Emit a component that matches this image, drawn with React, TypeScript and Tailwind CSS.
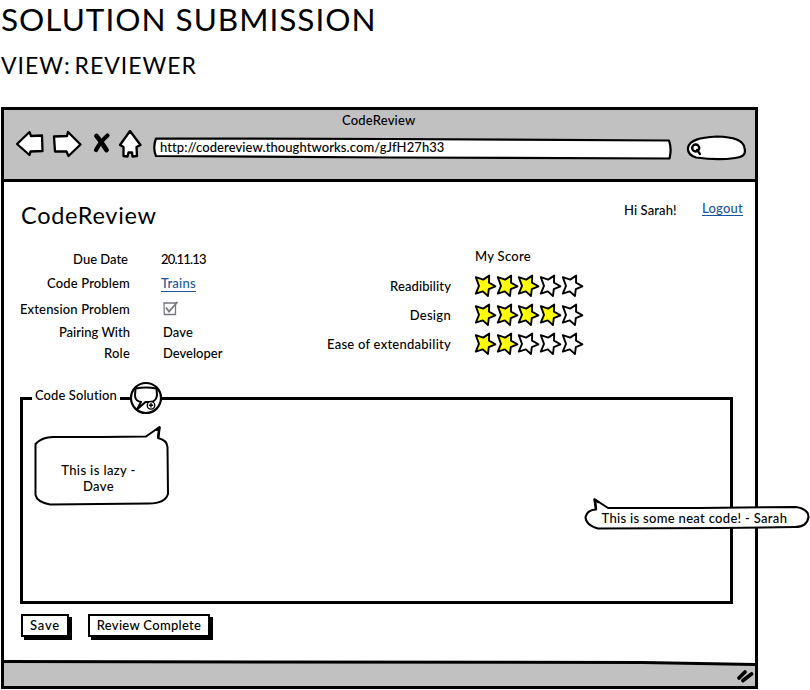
import React from "react";

const ink = { fill: "white", stroke: "black", strokeWidth: 2.2, strokeLinejoin: "round" as const, strokeLinecap: "round" as const };

function Star({ filled }: { filled: boolean }) {
  return (
    <svg className="h-[24px] w-[21.7px] overflow-visible" viewBox="0 0 21.7 24">
      <path {...ink} strokeWidth={1.9} fill={filled ? "#ffff00" : "white"} d="M1.8 3.2 L9.2 5.6 L15.2 1.6 L15 8.6 L21.4 12.3 L14.8 15.2 L14 22 L8.8 17.4 L1.8 19.6 L5 11.8 Z" />
    </svg>
  );
}

function Score({ label, value, tracking }: { label: string; value: number; tracking: string }) {
  return (
    <div className="flex h-[29px] items-center">
      <div className={"w-[134px] text-right " + tracking}>{label}</div>
      <div className="ml-[23px] flex">
        {[0, 1, 2, 3, 4].map((i) => (
          <Star key={i} filled={i < value} />
        ))}
      </div>
    </div>
  );
}

export default function App() {
  return (
    <div className="h-[690px] w-[810px] overflow-hidden bg-white font-['Lato','Open_Sans',sans-serif] text-[13px] leading-[16px] font-medium whitespace-nowrap text-black">
      <h1 className="h-[40px] pl-[1px] text-[31.5px] leading-[38px] font-normal tracking-[1px]">SOLUTION SUBMISSION</h1>
      <h2 className="h-[67px] pt-[11px] pl-[1px] text-[23px] leading-[28px] font-normal tracking-[1px] [word-spacing:-3px]">VIEW: REVIEWER</h2>

      <div className="relative ml-[1px] flex h-[582px] w-[757px] flex-col border-[3px] border-black bg-white">
        <header className="h-[72px] border-b-[3px] border-black bg-[#c1c1c1]">
          <div className="h-[20px] pt-[2px] pl-[338px]"><span className="tracking-[0.2px]">CodeReview</span></div>
          <div className="flex items-start">
            <svg className="h-[34px] w-[148px] shrink-0" viewBox="4 130 148 34">
              <path {...ink} strokeWidth="2.3" d="M17 144 L29.5 132 L31 136 L42 135.5 L42.5 151 L30.5 151.5 L29.5 155 Z" />
              <path {...ink} strokeWidth="2.3" d="M54 136.5 L67 136 L68 132 L80.5 144.5 L68.5 156 L66.5 151.5 L55 151.5 Z" />
              <path {...ink} strokeWidth="2.3" d="M120 145 L130 131 L140.5 145 L136.5 147 L137 156 L132.5 156.5 L132 152.5 L128.5 152.5 L127.5 156.5 L123.5 156 L123.5 147 Z" />
              <path d="M96.5 136 Q100 140 106.5 150" fill="none" stroke="black" strokeWidth="4.8" strokeLinecap="round" />
              <path d="M107.5 135.5 Q101 141 96 150" fill="none" stroke="black" strokeWidth="4.2" strokeLinecap="round" />
            </svg>
            <div className="relative mt-[6px] h-[24px] w-[522px] shrink-0">
              <svg className="absolute inset-0 h-full w-full" viewBox="152 136 522 24">
                <path {...ink} d="M156 138.5 L390 139 L669 140.5 Q672 149 669.5 158.5 L390 157.5 L156 156 Q152.5 148 156 138.5 Z" />
              </svg>
              <div className="relative pt-[3px] pl-[8px] tracking-[0.08px]">http://codereview.thoughtworks.com/gJfH27h33</div>
            </div>
            <svg className="mt-[3px] h-[30px] w-[72px] shrink-0" viewBox="674 133 72 30">
              <path {...ink} d="M696 157.5 C690 155.5 687.5 152 688 148 C689 140 700 137.5 717 136.5 C734 137 743.5 140 744.5 148 C746 154 744 156.5 735 158 C722 160 710 159.5 696 157.5 Z" />
              <circle cx="695.7" cy="148" r="3.5" fill="white" stroke="black" strokeWidth="2.4" />
              <path {...ink} strokeWidth="2.2" d="M697 150 L700 154" />
            </svg>
          </div>
        </header>

        <main className="flex-1">
          <div className="flex h-[63px]">
            <div className="w-[617px] pt-[18px] pl-[17px] text-[23.5px] leading-[30px] font-normal tracking-[0.7px]">CodeReview</div>
            <div className="w-[80px] pt-[20px] pl-[3px] tracking-[0.1px]">Hi Sarah!</div>
            <a className="mt-[19px] ml-[1px] h-[15px] border-b border-[#1b559f] leading-[14px] tracking-[0.2px] text-[#1b559f]">Logout</a>
          </div>

          <div className="flex h-[134px]">
            <div className="w-[313px] pt-[2px]">
              <div className="flex h-[24px] items-center"><div className="w-[124px] text-right">Due Date</div><div className="ml-[33px] tracking-[-0.85px]">20.11.13</div></div>
              <div className="flex h-[24px] items-center"><div className="w-[126px] text-right tracking-[0.15px]">Code Problem</div><a className="mt-[1px] ml-[31px] h-[16px] border-b border-[#1b559f] leading-[15px] tracking-[0.2px] text-[#1b559f]">Trains</a></div>
              <div className="flex h-[27px] items-center">
                <div className="w-[126px] text-right tracking-[0.16px]">Extension Problem</div>
                <svg className="ml-[33px] h-[15px] w-[16px]" viewBox="0 0 16 15" fill="none" stroke="#77777f">
                  <path strokeWidth="1.3" d="M1 2 H12.5 V13.5 H1.3 Z" />
                  <path strokeWidth="1.8" d="M3 6.5 L6 10.5 L14.5 1" />
                </svg>
              </div>
              <div className="flex h-[20px] items-center"><div className="w-[126px] text-right">Pairing With</div><div className="ml-[33px] tracking-[0.1px]">Dave</div></div>
              <div className="flex h-[22px] items-center"><div className="w-[126px] text-right tracking-[0.2px]">Role</div><div className="ml-[33px]">Developer</div></div>
            </div>
            <div>
              <div className="h-[26px] pt-[3px] pl-[158px] tracking-[0.3px]">My Score</div>
              <Score label="Readibility" value={3} tracking="tracking-[0.1px]" />
              <Score label="Design" value={4} tracking="tracking-[0.3px]" />
              <Score label="Ease of extendability" value={2} tracking="tracking-[0.25px]" />
            </div>
          </div>

          <section className="relative mt-[18px] ml-[16px] h-[207px] w-[713px] border-[3px] border-black">
            <div className="absolute -top-[13px] left-[9px] bg-white px-[3px] tracking-[0.08px]">Code Solution</div>
            <svg className="absolute -top-[19px] left-[106px] h-[34px] w-[34px]" viewBox="129 381 34 34">
              <circle {...ink} cx="146" cy="398" r="15" />
              <path {...ink} strokeWidth="2" d="M135.5 388.5 Q146 386.5 156.5 388.5 L157 395 Q156.5 401 151 402 L145.5 402 L137 409.5 L141 402 Q135.5 401 135 396 Z" />
              <circle cx="151" cy="405.3" r="3.8" fill="white" stroke="black" strokeWidth="1.3" />
              <path d="M148.8 405.3 H153.2 M151 403.1 V407.5" stroke="black" strokeWidth="1.4" />
            </svg>
            <div className="relative mt-[25px] ml-[11px] h-[82px] w-[136px]">
              <svg className="absolute inset-0 h-full w-full" viewBox="34 425 136 82">
                <path {...ink} strokeWidth="2" d="M35.5 444 Q42 437 53 437 L102 437 L146 436.5 L159.5 427 L158 438 Q167 440 167.5 447 L168 494 Q165 503.5 149 503.5 L50 504.5 Q37 502 35.5 495 Z" />
                <path {...ink} fill="none" strokeWidth="2.4" d="M157 430 L159.5 427.5 L158.3 437" />
              </svg>
              <div className="relative pt-[37px] pr-[7px] text-center tracking-[0.4px]">This is lazy -<br />Dave</div>
            </div>
          </section>

          <div className="mt-[10px] ml-[17px] flex gap-[18px]">
            <button className="h-[23px] w-[48px] border-2 border-black bg-white leading-[17px] tracking-[0.8px] shadow-[3px_3px_0_black]">Save</button>
            <button className="ml-[1px] h-[23px] w-[122px] border-2 border-black bg-white leading-[17px] tracking-[0.3px] shadow-[3px_3px_0_black]">Review Complete</button>
          </div>
        </main>

        <footer className="h-[26px] bg-black [clip-path:polygon(0_0,85%_1px,100%_3px,100%_100%,0_100%)]">
          <div className="flex h-full justify-end bg-[#c1c1c1] [clip-path:polygon(0_3px,85%_4px,100%_6px,100%_100%,0_100%)]">
            <svg className="h-[26px] w-[24px]" viewBox="731 661 24 26" stroke="black" strokeWidth="3.8" strokeLinecap="round">
              <path d="M739 679 L745 673" /><path d="M743 681.5 L751.5 675" />
            </svg>
          </div>
        </footer>

        <div className="absolute top-[388px] left-[580px] h-[34px] w-[228px]">
          <svg className="absolute inset-0 h-full w-full" viewBox="584 498 228 34">
            <path {...ink} strokeWidth="2" d="M595 499.5 L608 508 L700 508 L796 507 Q808.5 509 808.5 517 Q807 527 795 527 L720 528 L598 528.5 Q585.5 525 585.5 517 Q587 510 596 509.5 Z" />
            <path {...ink} fill="none" strokeWidth="2.4" d="M596 509 L594.5 499.5 L598 502" />
          </svg>
          <div className="relative pt-[12px] pl-[17.5px] tracking-[0.31px]">This is some neat code! - Sarah</div>
        </div>
      </div>
    </div>
  );
}
